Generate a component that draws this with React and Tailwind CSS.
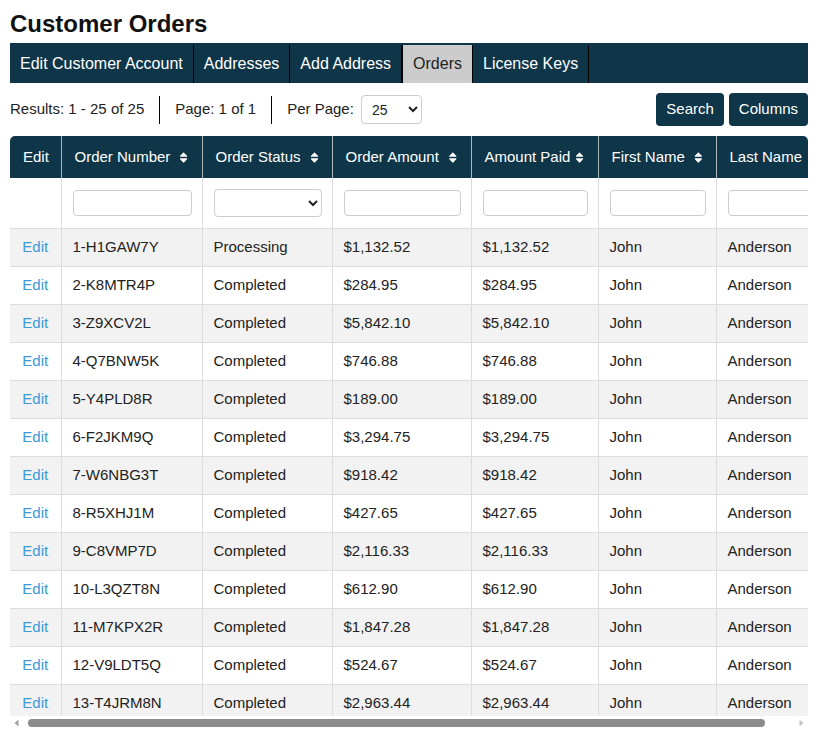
import { FaSort } from 'react-icons/fa';

const tabs = ['Edit Customer Account', 'Addresses', 'Add Address', 'Orders', 'License Keys'];

const columns = [
    { label: 'Edit', width: 'w-[51px]', center: true },
    { label: 'Order Number', width: 'w-[141px]', sort: true },
    { label: 'Order Status', width: 'w-[130px]', sort: true },
    { label: 'Order Amount', width: 'w-[139px]', sort: true },
    { label: 'Amount Paid', width: 'w-[127px]', sort: true, tight: true },
    { label: 'First Name', width: 'w-[118px]', sort: true },
    { label: 'Last Name', width: 'w-[128px]' },
];

const orders = [
    ['1-H1GAW7Y', 'Processing', '$1,132.52'],
    ['2-K8MTR4P', 'Completed', '$284.95'],
    ['3-Z9XCV2L', 'Completed', '$5,842.10'],
    ['4-Q7BNW5K', 'Completed', '$746.88'],
    ['5-Y4PLD8R', 'Completed', '$189.00'],
    ['6-F2JKM9Q', 'Completed', '$3,294.75'],
    ['7-W6NBG3T', 'Completed', '$918.42'],
    ['8-R5XHJ1M', 'Completed', '$427.65'],
    ['9-C8VMP7D', 'Completed', '$2,116.33'],
    ['10-L3QZT8N', 'Completed', '$612.90'],
    ['11-M7KPX2R', 'Completed', '$1,847.28'],
    ['12-V9LDT5Q', 'Completed', '$524.67'],
    ['13-T4JRM8N', 'Completed', '$2,963.44'],
];

function App() {
    return (
        <div className="h-screen overflow-hidden px-[10px] pt-[10px] bg-white text-[#222] font-['Liberation_Sans',Arial,sans-serif]">

            <h1 className="text-[24px] font-bold text-[#111] leading-[27px] mb-[6px]">Customer Orders</h1>

            {/* Tabs */}
            <div className="flex h-[40px] pt-[2px] bg-[#0f3549]">
                {tabs.map((tab) => (
                    <div key={tab}
                        className={`flex items-center px-[10px] text-[16px] border-r border-black ${
                            tab === 'Orders' ? 'bg-[#cccccc] text-[#222] border-l' : 'text-white'
                        }`}>
                        {tab}
                    </div>
                ))}
            </div>

            {/* Toolbar */}
            <div className="flex items-center justify-between mt-[10px] h-[33px] text-[15px]">
                <div className="flex items-center">
                    <span>Results: 1 - 25 of 25</span>
                    <div className="w-px h-[28px] bg-black mx-[15px]"></div>
                    <span>Page: 1 of 1</span>
                    <div className="w-px h-[28px] bg-black mx-[15px]"></div>
                    <span>Per Page:</span>
                    <select className="ml-[7px] w-[61px] h-[29px] border border-[#cccccc] rounded-[4px] pl-[6px] text-[14px] bg-white">
                        <option>25</option>
                    </select>
                </div>
                <div className="flex gap-[5px]">
                    <button className="h-[33px] px-[10px] rounded-[4px] bg-[#0f3549] text-white text-[15px]">Search</button>
                    <button className="h-[33px] px-[10px] rounded-[4px] bg-[#0f3549] text-white text-[15px]">Columns</button>
                </div>
            </div>

            {/* Table */}
            <div className="mt-[10px] h-[580px] overflow-hidden rounded-t-[5px]">
                <table className="table-fixed w-[832px] border-collapse text-[15px]">
                    <thead>
                        <tr className="bg-[#0f3549] text-white h-[42px]">
                            {columns.map((col, i) => (
                                <th key={col.label}
                                    className={`${col.width} font-normal px-[13px] ${i > 0 ? 'border-l border-[#aab4ba]' : ''} ${col.center ? 'text-center' : 'text-left'}`}>
                                    {col.sort ? (
                                        <span className={`flex items-center whitespace-nowrap ${col.tight ? 'gap-[5px]' : 'gap-[9px]'}`}>
                                            {col.label}
                                            <FaSort className="w-[10px] h-[13px]" />
                                        </span>
                                    ) : (
                                        <span className="whitespace-nowrap">{col.label}</span>
                                    )}
                                </th>
                            ))}
                        </tr>
                    </thead>
                    <tbody>
                        {/* Filters */}
                        <tr className="h-[50px] border-b border-[#dddddd]">
                            <td></td>
                            <td className="border-l border-[#dddddd] pl-[11px] pr-[10px]">
                                <input className="w-full h-[26px] border border-[#cccccc] rounded-[4px]" />
                            </td>
                            <td className="border-l border-[#dddddd] pl-[11px] pr-[10px]">
                                <select className="w-full h-[28px] border border-[#cccccc] rounded-[4px] bg-white">
                                    <option></option>
                                </select>
                            </td>
                            {[0, 1, 2, 3].map((n) => (
                                <td key={n} className="border-l border-[#dddddd] pl-[11px] pr-[10px]">
                                    <input className="w-full h-[26px] border border-[#cccccc] rounded-[4px]" />
                                </td>
                            ))}
                        </tr>

                        {orders.map(([num, status, amount], index) => (
                            <tr key={num}
                                className={`h-[38px] border-b border-[#dddddd] ${index % 2 === 0 ? 'bg-[#f2f2f2]' : 'bg-white'}`}>
                                <td className="text-center text-[#3d9ad8]">Edit</td>
                                <td className="border-l border-[#dddddd] px-[11px]">{num}</td>
                                <td className="border-l border-[#dddddd] px-[11px]">{status}</td>
                                <td className="border-l border-[#dddddd] px-[11px]">{amount}</td>
                                <td className="border-l border-[#dddddd] px-[11px]">{amount}</td>
                                <td className="border-l border-[#dddddd] px-[11px]">John</td>
                                <td className="border-l border-[#dddddd] px-[11px]">Anderson</td>
                            </tr>
                        ))}
                    </tbody>
                </table>
            </div>

            {/* Horizontal scrollbar */}
            <div className="flex items-center h-[14px] bg-white">
                <svg width="14" height="14" viewBox="0 0 14 14" className="shrink-0">
                    <path d="M8.5 3.5 L4.5 7 L8.5 10.5 Z" fill="#a0a0a0" />
                </svg>
                <div className="flex-1 px-[4px]">
                    <div className="ml-0 w-[737px] h-[8px] rounded-full bg-[#8b8b8b]"></div>
                </div>
                <svg width="14" height="14" viewBox="0 0 14 14" className="shrink-0">
                    <path d="M5.5 3.5 L9.5 7 L5.5 10.5 Z" fill="#c4c4c4" />
                </svg>
            </div>
        </div>
    );
}

export default App;
